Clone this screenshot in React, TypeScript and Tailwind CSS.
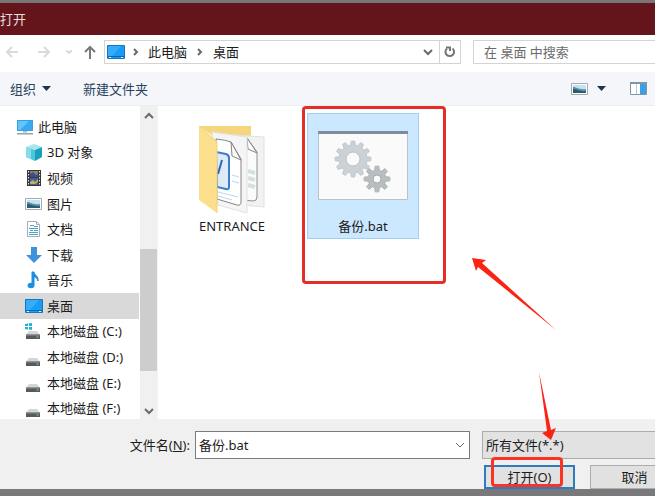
import { useState, type ReactNode } from "react";

type IconName = "pc" | "cube" | "video" | "picture" | "doc" | "download" | "music" | "desktop" | "system" | "disk";

const TREE: { label: string; icon: IconName; root?: boolean }[] = [
  { label: "此电脑", icon: "pc", root: true },
  { label: "3D 对象", icon: "cube" },
  { label: "视频", icon: "video" },
  { label: "图片", icon: "picture" },
  { label: "文档", icon: "doc" },
  { label: "下载", icon: "download" },
  { label: "音乐", icon: "music" },
  { label: "桌面", icon: "desktop" },
  { label: "本地磁盘 (C:)", icon: "system" },
  { label: "本地磁盘 (D:)", icon: "disk" },
  { label: "本地磁盘 (E:)", icon: "disk" },
  { label: "本地磁盘 (F:)", icon: "disk" },
];

const drive = (
  <>
    <path d="M4 9h8l3 4H1z" fill="#d3d5d6" />
    <path d="M1 12.500h14V17H1z" fill="#565a5b" />
    <path d="M1 12.500h14v1H1z" fill="#8b9091" />
    <path d="M11.500 14.500h2v1h-2z" fill="#7ddc8a" />
  </>
);

const ICONS: Record<IconName, ReactNode> = {
  pc: (
    <>
      <path d="M1 2h16v11H1z" fill="#3a9fe0" />
      <path d="M2 3h14v9H2z" fill="#36aaf2" />
      <path d="M2 3h11L4 12H2z" fill="#66c3fa" />
      <path d="M7 13h4v1.500H7z" fill="#a9bfcc" />
      <path d="M1 15h16v1.500H1z" fill="#8fa5b3" />
    </>
  ),
  cube: (
    <>
      <path d="M1 4l8-3 8 3-7 3z" fill="#a6e6ef" />
      <path d="M1 4l9 3v11l-9-4z" fill="#4cc6dc" />
      <path d="M10 7l7-3v10l-7 4z" fill="#1a9fbd" />
      <path d="M1 4l5 1.700v10.600L1 14z" fill="#86dce9" />
    </>
  ),
  video: (
    <>
      <path d="M2 1h14v16H2z" fill="#38383b" />
      <path d="M5 2h8v6H5z" fill="#8a8264" />
      <path d="M5 5l3-2 3 3 2-1v3H5z" fill="#36528e" />
      <path d="M5 9h8v7H5z" fill="#3d5fa3" />
      <path d="M5 13l3-2 2 2 3-3v3l-3 2H5z" fill="#c6ae57" />
      <path d="M3.500 2v15M14.500 2v15" stroke="#e6e6e6" strokeWidth="1" strokeDasharray="1.500 1.500" />
    </>
  ),
  picture: (
    <>
      <path d="M.5 3.500h16v11H.5z" fill="#fff" stroke="#a3abb1" />
      <path d="M2 5h13v8H2z" fill="#c5e2f2" />
      <path d="M2 7c4 0 5 3 13 2v4H2z" fill="#5a8fb0" />
      <path d="M2 9c4 0 7 3 13 2v2H2z" fill="#2d5c6b" />
    </>
  ),
  doc: (
    <>
      <path d="M2.500 1.500h9l3 3v12h-12z" fill="#fff" stroke="#a3aeb4" />
      <path d="M11.500 1.500v3h3" fill="none" stroke="#a3aeb4" />
      <path d="M5 5.500h4M4 8.500h9M9 6.500h4M5 10.500h3M9 10.500h4M4 12.500h9M4 14.500h9" stroke="#4fa0c8" />
    </>
  ),
  download: <path d="M6 1h6v8h5l-8 8-8-8h5z" fill="#3f92dc" />,
  music: (
    <>
      <path d="M7 1h2c0 3 5 4 4 9-1-3-2-4-4-4v8H7z" fill="#1a8fdf" stroke="#1a8fdf" />
      <ellipse cx="6" cy="14.500" rx="3.400" ry="2.700" fill="#1a8fdf" />
    </>
  ),
  desktop: (
    <>
      <path d="M.5 2.500h17v13H.5z" fill="#1a9cf5" stroke="#1875bd" />
      <path d="M1 3h13L5 13H1z" fill="#35adfa" />
      <path d="M1 13.500h16" stroke="#0b66ad" />
      <path d="M2 14.500h2M14 14.500h2" stroke="#e8f6ff" />
    </>
  ),
  system: (
    <>
      {drive}
      <path d="M0 2l3-.5V4H0zM4 1.300L7 1v3H4zM0 5h3v2.500L0 7zM4 5h3v3l-3-.4z" fill="#1fb3d4" />
    </>
  ),
  disk: <g transform="translate(0 1)">{drive}</g>,
};

function TreeIcon({ name, className = "" }: { name: IconName; className?: string }) {
  return (
    <svg width="18" height="18" viewBox="0 0 18 18" className={`flex-none ${className}`}>
      {ICONS[name]}
    </svg>
  );
}

function Chevron({ d, color = "#6a6a6a", width = 2 }: { d: string; color?: string; width?: number }) {
  return (
    <svg width="10" height="10" viewBox="0 0 10 10" fill="none" stroke={color} strokeWidth={width} className="flex-none">
      <path d={d} />
    </svg>
  );
}

const UP = "M1 7l4-4 4 4";
const DOWN = "M1 3l4 4 4-4";
const RIGHT = "M3 2l3 3-3 3";

function Caret() {
  return (
    <svg width="9" height="5" viewBox="0 0 9 5" className="flex-none">
      <path d="M0 0h9L4.500 5z" fill="#1c3557" />
    </svg>
  );
}

function gear(cx: number, cy: number, r: number, depth: number, teeth: number) {
  const points: string[] = [];
  const step = (Math.PI * 2) / teeth;
  for (let i = 0; i < teeth; i++) {
    [
      [-0.32, r - depth],
      [-0.18, r],
      [0.18, r],
      [0.32, r - depth],
    ].forEach(([t, radius]) => {
      const a = (i + t) * step;
      points.push(`${(cx + radius * Math.sin(a)).toFixed(2)} ${(cy - radius * Math.cos(a)).toFixed(2)}`);
    });
  }
  return `M${points.join("L")}Z`;
}

function BatchIcon() {
  return (
    <svg width="90" height="69" viewBox="0 0 90 69">
      <path d="M.5.5h89v68H.5z" fill="#fafafa" stroke="#b4c3ce" />
      <path d="M0 0h90v3H0z" fill="#7d8d9b" />
      <g fill="none" strokeLinejoin="round">
        <path d={gear(35, 28, 18, 4, 12)} fill="#cbd1d4" stroke="#c0c7cb" />
        <circle cx="35" cy="28" r="7" fill="#fafafa" stroke="#b9c0c4" />
        <path d={gear(59, 48, 13, 4, 8)} fill="#b8bdc0" stroke="#adb3b7" />
        <circle cx="59" cy="48" r="4" fill="#fafafa" stroke="#a5abaf" />
      </g>
    </svg>
  );
}

function FolderIcon() {
  return (
    <svg width="68" height="92" viewBox="0 0 68 92">
      <path d="M1 3h52v14H20z" fill="#f6d67d" />
      <path d="M36 12l30 2v70l-30-3z" fill="#f2f2f2" stroke="#e0e0e0" />
      <path d="M36 15h13l10 14v45q0 4-4 4l-10-1z" fill="#fbfbfb" stroke="#8f8f8f" />
      <path d="M49 15l1 11 9 4z" fill="#fff" stroke="#868686" />
      <path d="M50 48l7 2M50 55l7 2M50 62l7 2" stroke="#d3e2df" strokeWidth="4" />
      <path d="M14 9l35 5v76l-29-8z" fill="#f5f5f5" stroke="#e2e2e2" />
      <path d="M18 16q10 1 15 3l10 17v43q0 4-4 3l-20-6z" fill="#fff" stroke="#868686" />
      <path d="M33 19l1 14 9 4z" fill="#fafafa" stroke="#868686" />
      <path d="M18 29l10 2q3 1 3 4v29q0 3-3 2l-9-2z" fill="#dfeaf7" stroke="#3b7fcb" strokeWidth="2" />
      <path d="M24 37l-4 14" stroke="#2c67b3" strokeWidth="2" />
      <path d="M34 52l7 2M34 58l7 2M20 69l20 5M20 73l14 4" stroke="#bdd4ef" />
      <path d="M1 3l18 16v71L1 77z" fill="#fbdf8c" />
      <path d="M1 3l18 16v71" fill="none" stroke="#f2d27a" />
    </svg>
  );
}

export default function App() {
  const [selected, setSelected] = useState("桌面");
  const [fileName, setFileName] = useState("备份.bat");

  return (
    <div className="relative flex min-h-screen flex-col overflow-hidden bg-white font-['Noto_Sans','Noto_Sans_CJK_SC',sans-serif] text-[13px] leading-5 text-[#1c1c1c]">
      <div className="h-[3px] bg-[#777575]" />
      <header className="flex h-8 items-center bg-[#64141b] text-[#e8dcdd]">
        <h1>打开</h1>
      </header>

      <nav className="flex h-[37px] items-center pb-1">
        <button aria-label="后退" className="ml-1.5 flex-none">
          <svg width="12" height="12" viewBox="0 0 12 12" fill="none" stroke="#dadada" strokeWidth="2">
            <path d="M12 6H1M6 1L1 6l5 5" />
          </svg>
        </button>
        <button aria-label="前进" className="ml-5 flex-none">
          <svg width="12" height="12" viewBox="0 0 12 12" fill="none" stroke="#dadada" strokeWidth="2">
            <path d="M0 6h11M6 1l5 5-5 5" />
          </svg>
        </button>
        <button aria-label="最近浏览的位置" className="ml-4 flex-none">
          <svg width="6" height="4" viewBox="0 0 6 4" fill="none" stroke="#dadada" strokeWidth="2">
            <path d="M0 0l3 3 3-3" />
          </svg>
        </button>
        <button aria-label="上移" className="ml-3 flex-none">
          <svg width="12" height="14" viewBox="0 0 12 14" fill="none" stroke="#7a7a7a" strokeWidth="2">
            <path d="M6 14V2M1 7l5-5 5 5" />
          </svg>
        </button>
        <div className="ml-2 flex h-6 min-w-0 flex-1 items-center border border-[#d4d4d4]">
          <TreeIcon name="desktop" className="ml-0.5" />
          <span className="ml-1.5 flex">
            <Chevron d={RIGHT} />
          </span>
          <button className="ml-[7px] whitespace-nowrap">此电脑</button>
          <span className="ml-2 flex">
            <Chevron d={RIGHT} />
          </span>
          <button className="ml-2 whitespace-nowrap">桌面</button>
          <button aria-label="以前的位置" className="mr-1.5 ml-auto">
            <Chevron d={DOWN} />
          </button>
          <button aria-label="刷新" className="grid h-full w-[21px] flex-none place-items-center border-l border-[#d4d4d4]">
            <svg width="12" height="12" viewBox="0 0 12 12" fill="none" stroke="#757575" strokeWidth="2">
              <path d="M3 2.500a4.300 4.300 0 1 0 5.500 0" />
              <path d="M2 1.500h4V5" />
            </svg>
          </button>
        </div>
        <input
          aria-label="在 桌面 中搜索"
          placeholder="在 桌面 中搜索"
          className="ml-3 h-6 w-[182px] flex-none border border-r-0 border-[#d4d4d4] px-2.5 outline-none placeholder:text-[#6b6b6b]"
        />
      </nav>

      <div className="flex h-[34px] items-center border-b border-[#eceef0] bg-[#f4f6f9] pr-2 pl-2.5 text-[#28415f]">
        <button className="flex items-center gap-1.5">
          组织 <Caret />
        </button>
        <button className="ml-8">新建文件夹</button>
        <button aria-label="更改视图" className="ml-auto flex items-center gap-2">
          <TreeIcon name="picture" />
          <Caret />
        </button>
        <button aria-label="预览窗格" className="ml-6">
          <svg width="17" height="13" viewBox="0 0 17 13">
            <path d="M.5.500h16v12H.5z" fill="#fff" stroke="#7d97a8" />
            <path d="M0 0h17v2H0z" fill="#7d97a8" />
            <path d="M10 2h6v10h-6z" fill="#3d9ee0" />
            <path d="M6.500 2v10" stroke="#b5cbd8" />
          </svg>
        </button>
      </div>

      <main className="flex h-[313px]">
        <aside className="flex w-[158px] flex-none overflow-hidden border-r border-[#f3f3f3]">
          <ul className="mt-2 mr-px grid h-[307px] flex-1 auto-rows-fr">
            {TREE.map((item) => (
              <li key={item.label}>
                <button
                  onClick={() => setSelected(item.label)}
                  className={`flex h-full w-full items-center gap-1 whitespace-nowrap ${
                    item.root ? "pl-4" : "pl-[25px]"
                  } ${selected === item.label ? "bg-[#d9d9d9]" : ""}`}
                >
                  <TreeIcon name={item.icon} />
                  {item.label}
                </button>
              </li>
            ))}
          </ul>
          <div className="flex w-[17px] flex-none flex-col items-center bg-[#f0f0f0]">
            <button aria-label="向上滚动" className="grid h-5 place-items-center">
              <Chevron d={UP} />
            </button>
            <div className="mt-[123px] h-[122px] w-full bg-[#cdcdcd]" />
            <button aria-label="向下滚动" className="mt-auto grid h-4 place-items-center">
              <Chevron d={DOWN} />
            </button>
          </div>
        </aside>

        <section className="flex flex-1 items-start gap-[19px] pt-[7px] pl-[18px]">
          <button className="flex h-[126px] w-28 flex-col items-center justify-between pt-2.5 pb-[3px]">
            <FolderIcon />
            ENTRANCE
          </button>
          <div className="relative">
            <button className="flex h-[126px] w-28 flex-col items-center justify-between border border-[#a5d0ee] bg-[#cce8ff] pt-[17px] pb-0.5">
              <BatchIcon />
              备份.bat
            </button>
            <div className="pointer-events-none absolute -top-[7px] -left-[5px] h-[178px] w-36 rounded border-3 border-[#e42f29]" />
            <svg width="86" height="74" viewBox="0 0 86 74" className="pointer-events-none absolute top-36 left-[164px]">
              <path d="M1 1l14 2-4 3 74 67L7 10l-2 4z" fill="#fb2314" />
            </svg>
          </div>
        </section>
      </main>

      <footer className="h-[70px] overflow-hidden bg-[#f0f0f0] pt-3">
        <div className="flex h-7 items-center">
          <label htmlFor="file-name" className="w-[190px] flex-none text-right">
            文件名(<u>N</u>):
          </label>
          <div className="ml-[5px] flex h-7 min-w-0 flex-1 items-center border border-[#7a7a7a] bg-white pr-1">
            <input
              id="file-name"
              value={fileName}
              onChange={(e) => setFileName(e.target.value)}
              className="min-w-0 flex-1 px-[3px] outline-none"
            />
            <Chevron d={DOWN} width={1} />
          </div>
          <select
            aria-label="文件类型"
            className="ml-3 h-7 w-[173px] flex-none appearance-none border border-r-0 border-[#adadad] bg-[#e2e2e2] px-[3px] outline-none"
          >
            <option>所有文件(*.*)</option>
          </select>
        </div>
        <div className="mt-1.5 flex justify-end gap-[15px]">
          <div className="relative">
            <button className="h-6 w-[91px] border-2 border-[#2d7cc0] bg-[#e1e1e1]">打开(O)</button>
            <div className="pointer-events-none absolute -top-2 left-[7px] h-[30px] w-[72px] rounded border-3 border-[#fb3324]" />
          </div>
          <button className="-mr-6 h-6 w-[89px] border border-[#adadad] bg-[#e1e1e1]">取消</button>
        </div>
      </footer>
      <div className="h-[7px] bg-[#79797b]" />

      <svg width="20" height="70" viewBox="0 0 20 70" className="pointer-events-none absolute right-[97px] bottom-[54px]">
        <path d="M1 0l12 58 5-2-5 12-9-7 5-2z" fill="#fb2314" />
      </svg>
    </div>
  );
}
